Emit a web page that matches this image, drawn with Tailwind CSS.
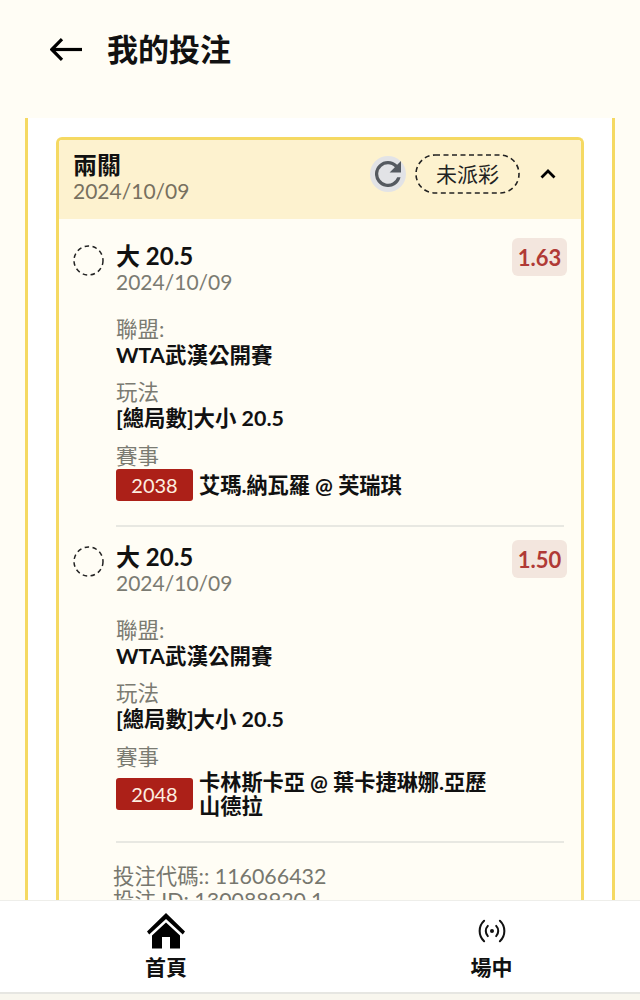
<!DOCTYPE html>
<html lang="zh-Hant">
<head>
<meta charset="utf-8">
<script src="https://cdn.jsdelivr.net/npm/@tailwindcss/browser@4"></script>
</head>
<body class="m-0 bg-[#fffdf5]">
<div class="flex h-[1000px] w-[640px] flex-col overflow-hidden bg-[#fffdf5] text-[#111] font-['Lato','Noto_Sans_CJK_TC',sans-serif]">
  <header class="flex h-[118px] shrink-0 items-start pl-[50px] pt-[30px]">
    <svg class="mt-[8px] h-[23px] w-[32px]" viewBox="0 0 32 23" fill="none" stroke="#000" stroke-width="3.200"><path d="M1.500 11.500H32"/><path d="M12 1.200L1.800 11.500 12 21.800"/></svg>
    <h1 class="ml-[25px] text-[31px] font-bold leading-[38px]">我的投注</h1>
  </header>
  <main class="mx-[25px] min-h-0 flex-1 overflow-hidden border-x-[3px] border-[#f5d962] bg-white px-[28px] pt-[19px]">
    <section class="overflow-hidden rounded-t-[6px] border-x-[3px] border-t-[3px] border-[#f5d962] bg-[#fffdf5]">
      <div class="flex h-[79px] items-start bg-[#fdf2cf] pl-[14px] pr-[25px]">
        <div class="pt-[12px]">
          <div class="text-[24px] font-bold leading-[26px]">兩關</div>
          <div class="text-[21px] leading-[25px] text-[#77705f]">2024/10/09</div>
        </div>
        <div class="ml-auto mt-[14px] flex items-center">
          <div class="flex h-[36px] w-[36px] items-center justify-center rounded-full bg-[#e2e3e6]">
            <svg class="h-[26px] w-[26px]" viewBox="4 4 16 16" fill="#555a60"><path d="M17.650 6.350A7.960 7.960 0 0 0 12 4a8 8 0 1 0 7.730 10h-2.080A6 6 0 1 1 12 6c1.660 0 3.140.69 4.220 1.780L13 11h7V4l-2.350 2.350z"/></svg>
          </div>
          <div class="relative ml-[9px] flex h-[40px] w-[105px] items-center justify-center text-[21px] text-[#222]">
            <span>未派彩</span>
            <svg class="absolute inset-0 h-[40px] w-[105px]" viewBox="0 0 105 40" fill="none" stroke="#222" stroke-width="1.600" stroke-dasharray="5 3.500"><rect x="1" y="1" width="103" height="38" rx="19"/></svg>
          </div>
          <svg class="ml-[20px] h-[12px] w-[16px]" viewBox="0 0 16 12" fill="none" stroke="#000" stroke-width="2.800"><path d="M1.500 9.500L8 3l6.500 6.500"/></svg>
        </div>
      </div>
      <div class="pl-[14px] pr-[14px] pt-[19px]">
        <article>
          <div class="flex items-start">
            <svg class="mt-[7px] h-[31px] w-[31px] shrink-0" viewBox="0 0 31 31" fill="none" stroke="#222" stroke-width="1.500" stroke-dasharray="4.500 3.500"><circle cx="15.500" cy="15.500" r="14.500"/></svg>
            <div class="ml-[12px] mt-[3px]">
              <div class="text-[24px] font-bold leading-[29px]">大 20.5</div>
              <div class="text-[21px] leading-[23px] text-[#7b7b72]">2024/10/09</div>
            </div>
            <div class="ml-auto flex h-[38px] w-[55px] items-center justify-center rounded-[6px] bg-[#f3e6de] text-[22px] font-bold text-[#b03a36]">1.63</div>
          </div>
          <div class="ml-[43px] pt-[23px]">
            <div class="text-[21.500px] leading-[26px] text-[#7b7b72]">聯盟:</div>
            <div class="text-[21.500px] font-bold leading-[26px]">WTA武漢公開賽</div>
            <div class="mt-[11px] text-[21.500px] leading-[26px] text-[#7b7b72]">玩法</div>
            <div class="text-[21.400px] font-bold leading-[26px]">[總局數]大小 20.5</div>
            <div class="mt-[12px] text-[21.500px] leading-[26px] text-[#7b7b72]">賽事</div>
            <div class="flex items-center">
              <div class="flex h-[32px] w-[77px] shrink-0 items-center justify-center rounded-[3px] bg-[#ac2018] text-[20px] text-[#fdeee0]">2038</div>
              <div class="ml-[6px] w-[300px] text-[21.200px] font-bold leading-[24px]">艾瑪.納瓦羅 @ 芙瑞琪</div>
            </div>
          </div>
          <div class="ml-[43px] mr-[3px] mt-[24px] h-[2px] bg-[#e8e8e2]"></div>
        </article>
        <article class="pt-[13px]">
          <div class="flex items-start">
            <svg class="mt-[6px] h-[31px] w-[31px] shrink-0" viewBox="0 0 31 31" fill="none" stroke="#222" stroke-width="1.500" stroke-dasharray="4.500 3.500"><circle cx="15.500" cy="15.500" r="14.500"/></svg>
            <div class="ml-[12px] mt-[2px]">
              <div class="text-[24px] font-bold leading-[30px]">大 20.5</div>
              <div class="-mt-[1px] text-[21px] leading-[23px] text-[#7b7b72]">2024/10/09</div>
            </div>
            <div class="ml-auto flex h-[38px] w-[55px] items-center justify-center rounded-[6px] bg-[#f3e6de] text-[22px] font-bold text-[#b03a36]">1.50</div>
          </div>
          <div class="ml-[43px] pt-[23px]">
            <div class="text-[21.500px] leading-[26px] text-[#7b7b72]">聯盟:</div>
            <div class="text-[21.500px] font-bold leading-[26px]">WTA武漢公開賽</div>
            <div class="mt-[11px] text-[21.500px] leading-[26px] text-[#7b7b72]">玩法</div>
            <div class="text-[21.400px] font-bold leading-[26px]">[總局數]大小 20.5</div>
            <div class="mt-[12px] text-[21.500px] leading-[26px] text-[#7b7b72]">賽事</div>
            <div class="flex items-center">
              <div class="flex h-[32px] w-[77px] shrink-0 items-center justify-center rounded-[3px] bg-[#ac2018] text-[20px] text-[#fdeee0]">2048</div>
              <div class="ml-[6px] w-[300px] text-[21.200px] font-bold leading-[24px]">卡林斯卡亞 @ 葉卡捷琳娜.亞歷山德拉</div>
            </div>
          </div>
          <div class="ml-[43px] mr-[3px] mt-[23px] h-[2px] bg-[#e8e8e2]"></div>
        </article>
        <div class="ml-[40px] pt-[20px] text-[21.400px] leading-[26px] text-[#77776e]">
          <div>投注代碼:: 116066432</div>
          <div class="-mt-[2px]">投注 ID: 130088920.1</div>
        </div>
      </div>
    </section>
  </main>
  <nav class="flex h-[92px] shrink-0 border-t border-[#eeeeea] bg-white">
    <div class="flex w-[332px] flex-col items-center pt-[12px]">
      <svg class="h-[36px] w-[38px]" viewBox="0 0 38 36" fill="#000"><path d="M19 0L0 18.500l2.200 3L19 6l16.800 15.500 2.200-3z"/><path d="M19 9.500L5 22.500V35.500h10V24h8v11.500h10V22.500z"/></svg>
      <div class="mt-[5px] text-[21px] font-bold leading-[26px]">首頁</div>
    </div>
    <div class="flex w-[308px] flex-col items-center pl-[11px] pt-[17px]">
      <svg class="h-[26px] w-[28px]" viewBox="0 0 30 28" fill="none" stroke="#111" stroke-width="2.200" stroke-linecap="round"><circle cx="15" cy="14" r="2.200" fill="#111" stroke="none"/><path d="M10.500 8.500a8 8 0 0 0 0 11"/><path d="M19.500 8.500a8 8 0 0 1 0 11"/><path d="M6.500 3a15 15 0 0 0 0 22"/><path d="M23.500 3a15 15 0 0 1 0 22"/></svg>
      <div class="mt-[10px] text-[21px] font-bold leading-[26px]">場中</div>
    </div>
  </nav>
  <div class="h-[8px] shrink-0 border-t-2 border-[#e6e6e2] bg-[#f8f6ee]"></div>
</div>
</body>
</html>
